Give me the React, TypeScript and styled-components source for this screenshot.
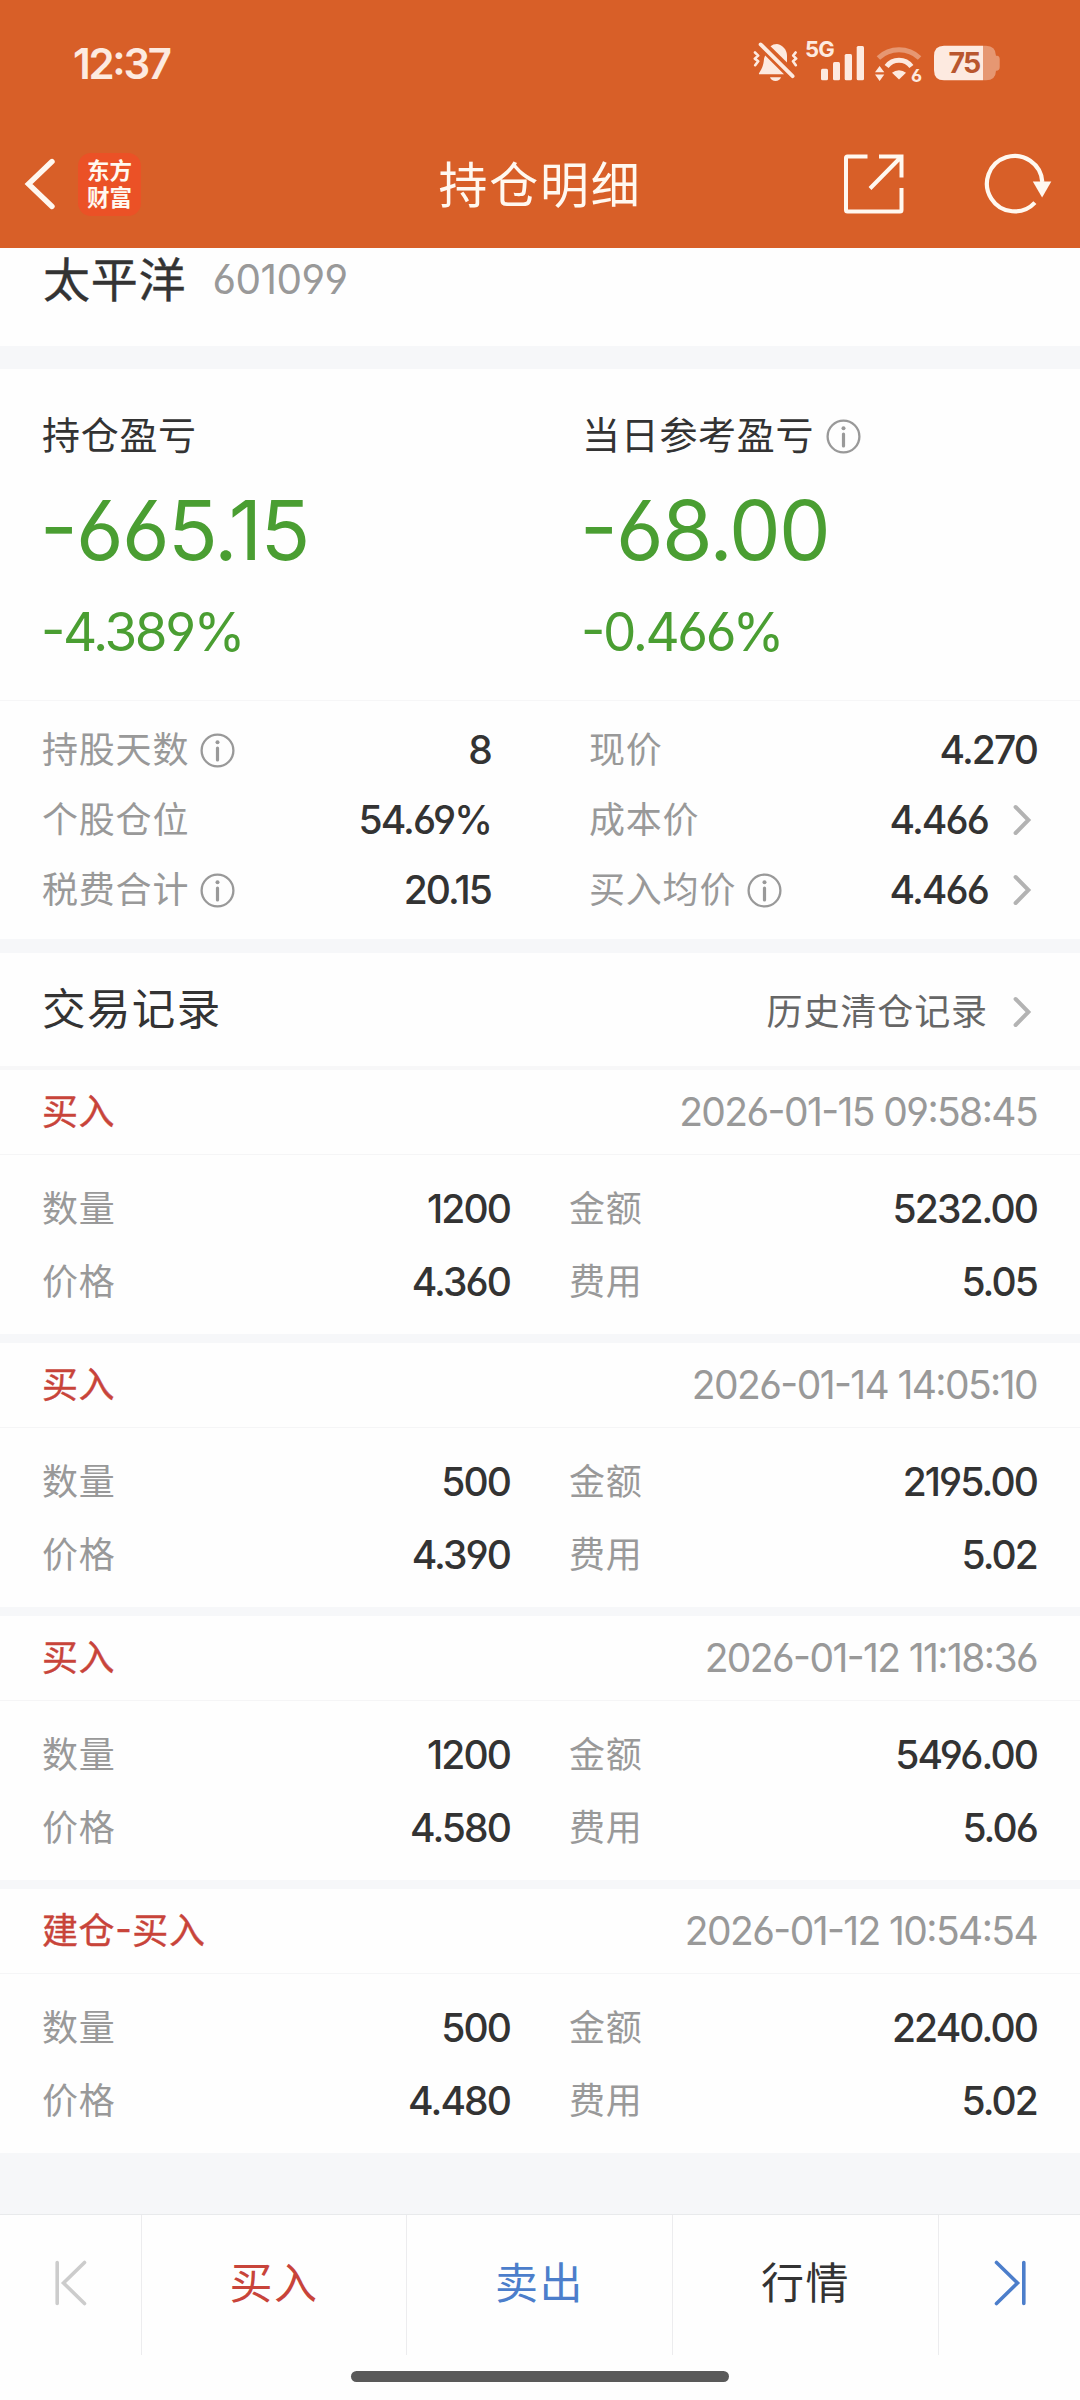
import React from "react";
import styled, { createGlobalStyle } from "styled-components";

const GlobalStyle = createGlobalStyle`
  * { box-sizing: border-box; }
  body {
    margin: 0;
    background: #fefefe;
    color: #333;
    font-family: Inter, "Noto Sans CJK SC", sans-serif;
    font-feature-settings: "case", "cv03", "cv04";
  }
  svg { display: block; flex: none; overflow: visible; }
`;

const Screen = styled.div`
  width: 1080px;
  height: 2400px;
  display: flex;
  flex-direction: column;
  overflow: hidden;
  background: #fefefe;
  white-space: nowrap;
`;

const Header = styled.header`
  height: 248px;
  background: #d85f28;
  color: #fff8f0;
`;

const StatusBar = styled.div`
  height: 120px;
  display: flex;
  align-items: center;
  justify-content: space-between;
  padding: 7px 79px 0 73px;
  color: #fdeae0;
`;

const Clock = styled.div`
  font-size: 42px;
  font-weight: 600;
  line-height: 50px;
  letter-spacing: -2.3px;
`;

const StatusIcons = styled.div`
  display: flex;
  align-items: center;
  gap: 6px;
  margin-top: -3px;
`;

const NavBar = styled.div`
  height: 128px;
  display: grid;
  grid-template-columns: 1fr auto 1fr;
  align-items: center;
`;

const NavSide = styled.div<{ $end?: boolean }>`
  display: flex;
  align-items: center;
  justify-content: ${(p) => (p.$end ? "flex-end" : "flex-start")};
  gap: ${(p) => (p.$end ? 81 : 22)}px;
  padding: ${(p) => (p.$end ? "0 28px 0 0" : "0 0 0 24px")};
`;

const NavTitle = styled.h1`
  margin: 3px 0 0;
  font-size: 49px;
  font-weight: 400;
  line-height: 64px;
  letter-spacing: 1.7px;
`;

const Logo = styled.div`
  width: 63px;
  height: 63px;
  border-radius: 13px;
  background: #eb5126;
  display: flex;
  flex-direction: column;
  align-items: center;
  justify-content: center;
  font-size: 22.5px;
  font-weight: 700;
  line-height: 27px;
  padding-bottom: 1px;
`;

const StockRow = styled.section`
  height: 98px;
  padding: 0 43px 35px;
  display: flex;
  align-items: center;
`;

const StockName = styled.span`
  font-size: 47px;
  font-weight: 400;
  line-height: 60px;
  letter-spacing: 0.8px;
  -webkit-text-stroke: 0.4px #333;
`;

const StockCode = styled.span`
  margin-left: 26px;
  font-size: 40.5px;
  line-height: 60px;
  color: #999;
  letter-spacing: -0.5px;
`;

const Band = styled.div<{ $h: number; $light?: boolean }>`
  height: ${(p) => p.$h}px;
  flex: none;
  background: ${(p) => (p.$light ? "#f7f7f8" : "#f6f7f9")};
`;

const Summary = styled.section`
  display: grid;
  grid-template-columns: 1fr 1fr;
  padding: 44px 0 38px;
  border-bottom: 1px solid #f6f6f7;
`;

const SummaryCell = styled.div`
  padding-left: 42px;
  display: flex;
  flex-direction: column;
  gap: 31px;
`;

const SummaryLabel = styled.div`
  height: 47px;
  display: flex;
  align-items: center;
  gap: 12px;
  font-size: 38px;
  line-height: 47px;
  letter-spacing: 0.7px;
`;

const LabelText = styled.span`
  margin-top: -2px;
`;

const Profit = styled.div`
  height: 80px;
  line-height: 80px;
  font-size: 82px;
  letter-spacing: -1.7px;
  margin-left: -2px;
  color: #4a9e32;
`;

const Rate = styled.div`
  height: 60px;
  line-height: 60px;
  font-size: 53px;
  letter-spacing: -2.4px;
  margin-left: -1px;
  color: #4a9e32;
`;

const Stats = styled.section`
  display: grid;
  grid-template-columns: 1fr 1fr;
  padding: 14px 0;
`;

const StatCell = styled.div<{ $right?: boolean }>`
  height: 70px;
  display: flex;
  align-items: center;
  justify-content: space-between;
  padding: ${(p) => (p.$right ? "0 43px 0 49px" : "0 49px 0 42px")};
`;

const Label = styled.span`
  display: flex;
  align-items: center;
  gap: 11px;
  font-size: 36px;
  line-height: 50px;
  letter-spacing: 0.8px;
  color: #999;
`;

const Value = styled.span`
  display: flex;
  align-items: center;
  font-size: 39px;
  font-weight: 450;
  line-height: 50px;
  letter-spacing: -1.9px;
`;

const ChevronSlot = styled.span`
  margin-left: 24px;
  margin-right: 5px;
`;

const SectionHead = styled.div`
  height: 113px;
  display: flex;
  align-items: center;
  justify-content: space-between;
  padding: 0 43px 0 42px;
`;

const SectionTitle = styled.h2`
  margin: 0 0 2px;
  font-size: 43.5px;
  font-weight: 400;
  line-height: 56px;
  letter-spacing: 1.4px;
`;

const SectionLink = styled.a`
  display: flex;
  align-items: center;
  margin-top: 4px;
  font-size: 36px;
  line-height: 50px;
  letter-spacing: 0.9px;
  color: #666;
`;

const RecordHead = styled.div`
  height: 85px;
  display: flex;
  align-items: center;
  justify-content: space-between;
  padding: 0 43px 0 42px;
  border-bottom: 1px solid #f5f5f6;
`;

const RecordType = styled.span`
  font-size: 36px;
  line-height: 50px;
  letter-spacing: 0.6px;
  color: #c8443a;
  -webkit-text-stroke: 0.4px #c8443a;
`;

const RecordTime = styled.time`
  font-size: 39px;
  line-height: 50px;
  letter-spacing: -1.6px;
  color: #999;
`;

const RecordBody = styled.div`
  display: grid;
  grid-template-columns: 468px 468px;
  justify-content: space-between;
  padding: 17px 43px 16px 42px;
`;

const RecordCell = styled.div`
  height: 73px;
  display: flex;
  align-items: center;
  justify-content: space-between;
`;

const Footer = styled.nav`
  height: 141px;
  display: grid;
  grid-template-columns: 142px 265px 266px 266px 141px;
  border-top: 1px solid #e8eaec;
`;

const FooterItem = styled.button<{ $color?: string }>`
  border: 0;
  border-right: 1px solid #ececee;
  padding: 0 0 4px;
  background: none;
  font: inherit;
  font-size: 43px;
  line-height: 56px;
  letter-spacing: 1.6px;
  color: ${(p) => p.$color ?? "#333"};
  display: flex;
  align-items: center;
  justify-content: center;
  &:last-child { border-right: 0; }
`;

const HomeArea = styled.div`
  height: 45px;
  display: flex;
  justify-content: center;
  padding-top: 16px;
`;

const HomeBar = styled.div`
  width: 378px;
  height: 11px;
  border-radius: 6px;
  background: #595959;
`;

const BellOff = () => (
  <svg width="48" height="44" viewBox="0 0 48 44" fill="currentColor">
    <path d="M19.5 6.2Q22 4 26 4C32 5 36 10 36 16V22.6Z" />
    <path d="M14.2 15.4 33 34.3H8.6Q7.6 34.3 8 33.2C11.6 28 12.6 24 13 19Q13.3 17 14.2 15.4Z" />
    <path d="M19 37.2H30Q28.5 41 24.6 41Q20.5 41 19 37.2Z" />
    <g fill="none" stroke="currentColor" strokeLinecap="round" strokeLinejoin="round">
      <path strokeWidth="3.8" d="M9.6 4.4 41.6 36.2" />
      <path strokeWidth="2.6" d="M4 12.5 7.2 15.6 3.8 18.6 7.2 21.2 4.2 25.2M44.6 12.5 42.2 15.6 45.2 18.6 42 21.2 44.8 25.2" />
    </g>
  </svg>
);

const Signal = () => (
  <svg width="62" height="44" viewBox="0 0 62 44" fill="currentColor">
    <text x="0" y="17.3" fontSize="22" fontWeight="700" letterSpacing="-0.8">5G</text>
    <rect x="16" y="28.7" width="7" height="11.5" rx="1.5" />
    <rect x="28" y="22" width="7" height="18.2" rx="1.5" />
    <rect x="39.7" y="14" width="7.3" height="26.2" rx="1.5" />
    <rect x="51.7" y="6" width="7.3" height="34.2" rx="1.5" />
  </svg>
);

const Wifi = () => (
  <svg width="54" height="44" viewBox="0 0 54 44" fill="currentColor">
    <path d="M5.4 18A30 30 0 0 1 46.6 18" fill="none" stroke="currentColor" strokeWidth="5" opacity=".4" />
    <path d="M13.6 26.4A15.5 15.5 0 0 1 38.4 26.4" fill="none" stroke="currentColor" strokeWidth="5" />
    <path d="M26 39.4 19 32.8A11 11 0 0 1 33 32.8Z" />
    <path d="M6.6 26 11.3 32.3H2ZM6.6 41 11.3 34.6H2Z" />
    <text x="38" y="41.6" fontSize="18" fontWeight="700">6</text>
  </svg>
);

const Battery = () => (
  <svg width="68" height="44" viewBox="0 0 68 44" fill="currentColor">
    <path opacity=".4" d="M50 5.7H53Q62.7 5.7 63 15.7H64Q66.7 16 66.7 19V27Q66.7 30.4 64 30.7H63Q62.7 40.3 53 40.3H50Z" />
    <path d="M11 5.7H50V40.3H11Q1 40.3 1 30V16Q1 5.7 11 5.7Z" />
    <text x="15.6" y="33.3" fontSize="28.5" fontWeight="700" letterSpacing="-1.8" fill="#b9572f">75</text>
  </svg>
);

const BackIcon = () => (
  <svg width="32" height="54" viewBox="0 0 32 54" fill="none" stroke="currentColor" strokeWidth="5.4" strokeLinecap="round">
    <path d="M28 4.5 4.5 27 28 49.5" />
  </svg>
);

const ShareIcon = () => (
  <svg width="60" height="60" viewBox="0 0 60 60" fill="none" stroke="currentColor" strokeWidth="4" strokeLinejoin="round">
    <path d="M24.5 2.5H4.5Q3 2.5 3 4V56Q3 57.5 4.5 57.5H57Q58.5 57.5 58.5 56V34" />
    <path d="M36 2.5H58.5V23.5M57.5 3.5 27 34.5" strokeLinejoin="miter" />
  </svg>
);

const RefreshIcon = () => (
  <svg width="68" height="60" viewBox="0 0 68 60" fill="none" stroke="currentColor" strokeWidth="4.2">
    <path d="M58.3 28A27.7 27.7 0 1 0 50.9 48.6" />
    <path d="M48.8 27.5H67.3L58.1 43.5Z" fill="currentColor" stroke="none" />
  </svg>
);

const InfoIcon = () => (
  <svg width="35" height="35" viewBox="0 0 35 35" fill="none" stroke="#999" strokeWidth="2.3">
    <circle cx="17.5" cy="17.5" r="15.9" />
    <path d="M17.5 15V27" strokeWidth="3.2" strokeLinecap="round" />
    <circle cx="17.5" cy="9.3" r="2" fill="#999" stroke="none" />
  </svg>
);

const Chevron = () => (
  <svg width="20" height="34" viewBox="0 0 20 34" fill="none" stroke="#b3b3b3" strokeWidth="4" strokeLinecap="round">
    <path d="M3.6 4 16.4 17 3.6 30" />
  </svg>
);

const FirstIcon = () => (
  <svg width="34" height="48" viewBox="0 0 34 48" fill="none" stroke="currentColor" strokeWidth="3.6" strokeLinecap="round">
    <path d="M3.2 3.5V44.5M30.5 3.5 9.5 24 30.5 44.5" />
  </svg>
);

const LastIcon = () => (
  <svg width="34" height="48" viewBox="0 0 34 48" fill="none" stroke="currentColor" strokeWidth="3.6" strokeLinecap="round">
    <path d="M30.8 3.5V44.5M3.5 3.5 24.5 24 3.5 44.5" />
  </svg>
);

type Stat = { label: string; value: string; info?: boolean; link?: boolean };

const stats: Stat[] = [
  { label: "持股天数", value: "8", info: true },
  { label: "现价", value: "4.270" },
  { label: "个股仓位", value: "54.69%" },
  { label: "成本价", value: "4.466", link: true },
  { label: "税费合计", value: "20.15", info: true },
  { label: "买入均价", value: "4.466", info: true, link: true },
];

const records = [
  { type: "买入", time: "2026-01-15 09:58:45", qty: "1200", amount: "5232.00", price: "4.360", fee: "5.05" },
  { type: "买入", time: "2026-01-14 14:05:10", qty: "500", amount: "2195.00", price: "4.390", fee: "5.02" },
  { type: "买入", time: "2026-01-12 11:18:36", qty: "1200", amount: "5496.00", price: "4.580", fee: "5.06" },
  { type: "建仓-买入", time: "2026-01-12 10:54:54", qty: "500", amount: "2240.00", price: "4.480", fee: "5.02" },
];

export default function App() {
  return (
    <Screen>
      <GlobalStyle />
      <Header>
        <StatusBar>
          <Clock>12:37</Clock>
          <StatusIcons>
            <BellOff />
            <Signal />
            <Wifi />
            <Battery />
          </StatusIcons>
        </StatusBar>
        <NavBar>
          <NavSide>
            <BackIcon />
            <Logo>
              <span>东方</span>
              <span>财富</span>
            </Logo>
          </NavSide>
          <NavTitle>持仓明细</NavTitle>
          <NavSide $end>
            <ShareIcon />
            <RefreshIcon />
          </NavSide>
        </NavBar>
      </Header>

      <StockRow>
        <StockName>太平洋</StockName>
        <StockCode>601099</StockCode>
      </StockRow>
      <Band $h={23} />

      <Summary>
        <SummaryCell>
          <SummaryLabel>
            <LabelText>持仓盈亏</LabelText>
          </SummaryLabel>
          <Profit>-665.15</Profit>
          <Rate>-4.389%</Rate>
        </SummaryCell>
        <SummaryCell>
          <SummaryLabel>
            <LabelText>当日参考盈亏</LabelText>
            <InfoIcon />
          </SummaryLabel>
          <Profit>-68.00</Profit>
          <Rate>-0.466%</Rate>
        </SummaryCell>
      </Summary>

      <Stats>
        {stats.map((s, i) => (
          <StatCell key={s.label} $right={i % 2 === 1}>
            <Label>
              {s.label}
              {s.info && <InfoIcon />}
            </Label>
            <Value>
              {s.value}
              {s.link && (
                <ChevronSlot>
                  <Chevron />
                </ChevronSlot>
              )}
            </Value>
          </StatCell>
        ))}
      </Stats>
      <Band $h={14} />

      <SectionHead>
        <SectionTitle>交易记录</SectionTitle>
        <SectionLink>
          历史清仓记录
          <ChevronSlot>
            <Chevron />
          </ChevronSlot>
        </SectionLink>
      </SectionHead>
      <Band $h={4} $light />

      {records.map((r, i) => (
        <React.Fragment key={r.time}>
          {i > 0 && <Band $h={9} />}
          <RecordHead>
            <RecordType>{r.type}</RecordType>
            <RecordTime>{r.time}</RecordTime>
          </RecordHead>
          <RecordBody>
            <RecordCell>
              <Label>数量</Label>
              <Value>{r.qty}</Value>
            </RecordCell>
            <RecordCell>
              <Label>金额</Label>
              <Value>{r.amount}</Value>
            </RecordCell>
            <RecordCell>
              <Label>价格</Label>
              <Value>{r.price}</Value>
            </RecordCell>
            <RecordCell>
              <Label>费用</Label>
              <Value>{r.fee}</Value>
            </RecordCell>
          </RecordBody>
        </React.Fragment>
      ))}
      <Band $h={61} />

      <Footer>
        <FooterItem $color="#ccc"><FirstIcon /></FooterItem>
        <FooterItem $color="#c8443a">买入</FooterItem>
        <FooterItem $color="#4c7ecb">卖出</FooterItem>
        <FooterItem>行情</FooterItem>
        <FooterItem $color="#4c7ecb"><LastIcon /></FooterItem>
      </Footer>
      <HomeArea>
        <HomeBar />
      </HomeArea>
    </Screen>
  );
}
